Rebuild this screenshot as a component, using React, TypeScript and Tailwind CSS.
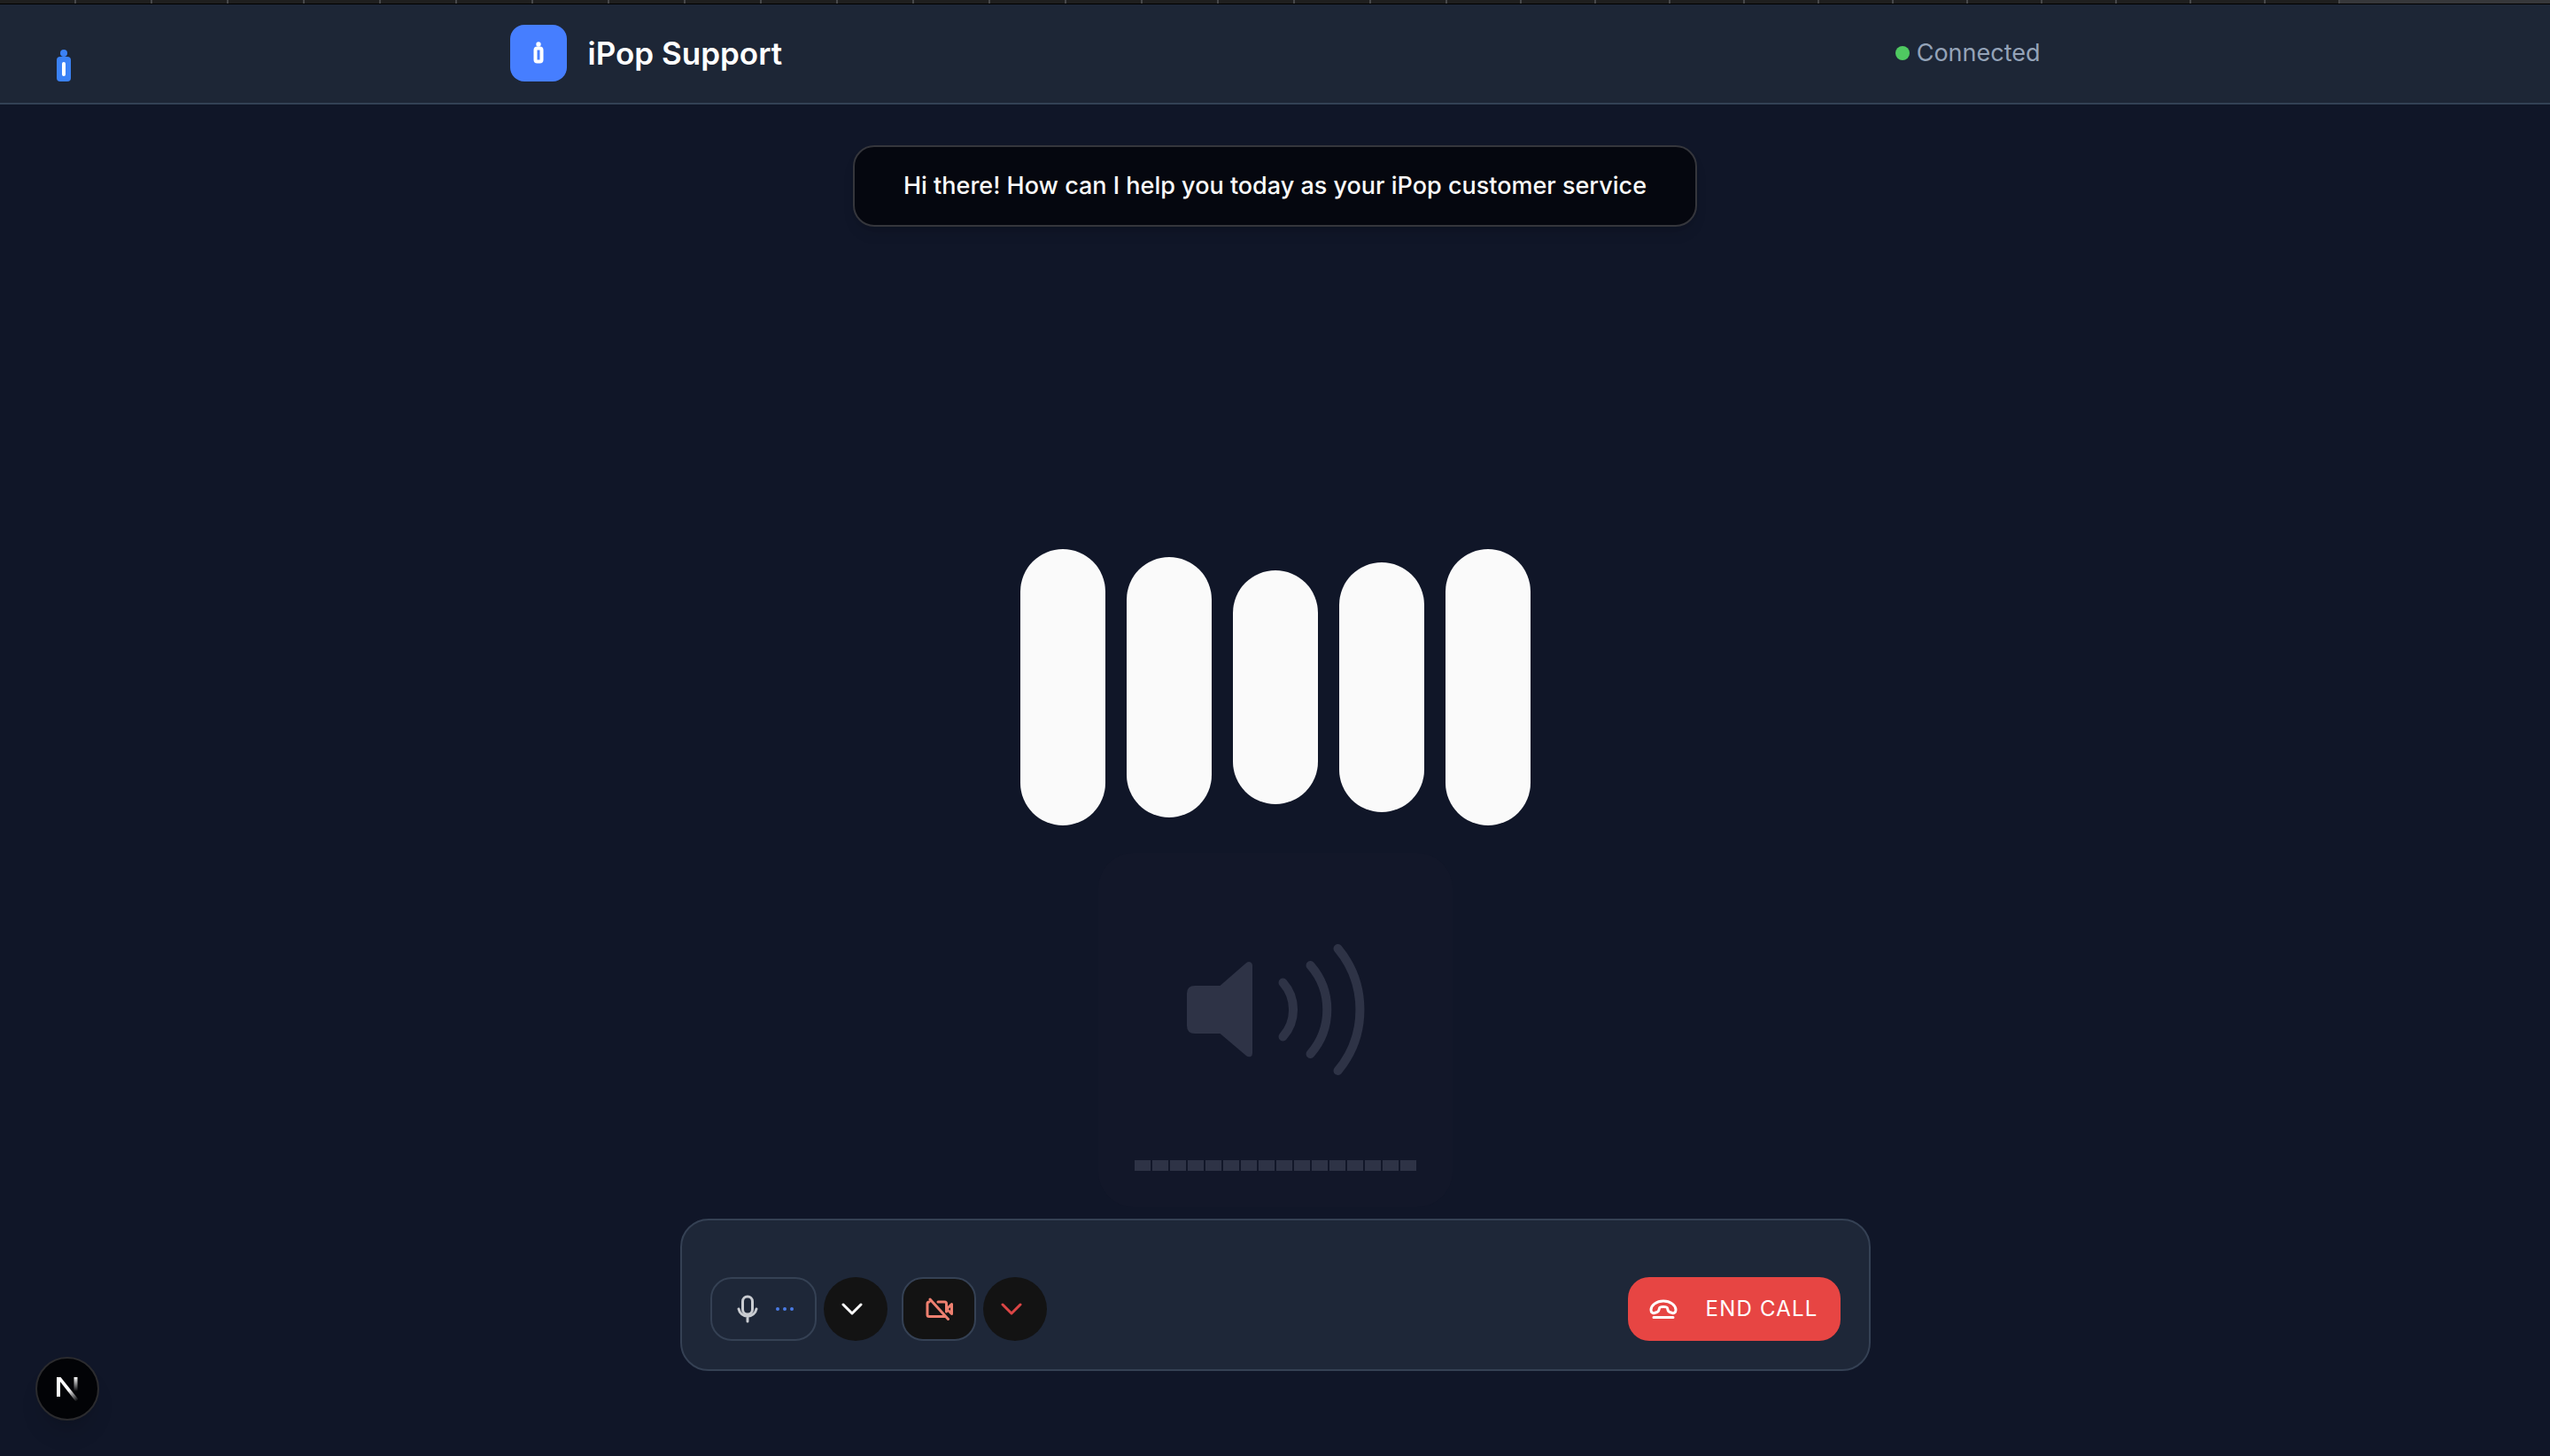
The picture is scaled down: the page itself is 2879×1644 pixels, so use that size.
import React from "react";

const FONT = "font-['Inter',sans-serif]";

function TabStrip() {
  return (
    <div aria-hidden="true" className="flex h-[5px] border-b border-black bg-[#1f1f1f]">
      {Array.from({ length: 19 }, (_, i) => (
        <div key={"a" + i} className="w-[86px] shrink-0 border-r-2 border-[#47484a]" />
      ))}
      {Array.from({ length: 12 }, (_, i) => (
        <div key={"b" + i} className="w-[84px] shrink-0 border-r-2 border-[#47484a]" />
      ))}
      <div className="flex-1 bg-[#36373a]" />
    </div>
  );
}

function Header() {
  return (
    <header className="relative border-b-2 border-[#334155] bg-[#1d2636] px-8 pt-[23px] pb-6">
      <svg aria-hidden="true" className="absolute top-[51px] left-16" width="16" height="36" viewBox="0 0 16 36">
        <circle cx="8" cy="4" r="4" fill="#3b82f6" />
        <rect y="8" width="16" height="28" rx="4" fill="#3b82f6" />
        <rect x="6" y="14" width="4" height="16" rx="2" fill="#fff" />
      </svg>
      <div className="mx-auto flex max-w-[1728px] items-center justify-between">
        <div className="flex items-center gap-6">
          <div className="flex size-16 items-center justify-center rounded-2xl bg-[#467eff]">
            <svg aria-hidden="true" width="12" height="26" viewBox="0 0 12 26">
              <circle cx="6" cy="3" r="2.7" fill="#fff" />
              <rect x="2.5" y="7.5" width="7" height="15" rx="2" fill="none" stroke="#fff" strokeWidth="4" />
            </svg>
          </div>
          <h1 className="text-[35px] leading-[56px] font-semibold text-white">iPop Support</h1>
        </div>
        <div className="flex items-center gap-2">
          <span className="size-4 rounded-full bg-[#4fc961]" />
          <span className="text-[27px] leading-10 text-[#94a3b8]">Connected</span>
        </div>
      </div>
    </header>
  );
}

function Speaker() {
  return (
    <svg aria-hidden="true" className="overflow-visible" width="200" height="150" viewBox="0 0 200 150">
      <path
        d="M9 48H37.5L67 22.300Q69.500 20.300 72 21.500Q74 22.500 74 25V124Q74 127 72 128Q69.500 129 67 127L37.500 102H9Q0 102 0 93V57Q0 48 9 48Z"
        fill="#2e3346"
      />
      <g fill="none" stroke="#2e3346" strokeWidth="10" strokeLinecap="round">
        <path d="M108.500 44.500A46 46 0 0 1 108.500 105.500" />
        <path d="M139.500 25A76 76 0 0 1 139.500 125" />
        <path d="M170.500 6A108 108 0 0 1 170.500 144" />
      </g>
    </svg>
  );
}

function Chevron() {
  return (
    <svg aria-hidden="true" width="24" height="14" viewBox="0 0 24 14" fill="none" stroke="currentColor" strokeWidth="3" strokeLinecap="round" strokeLinejoin="round">
      <path d="M2 2L12 12L22 2" />
    </svg>
  );
}

function Controls() {
  return (
    <section aria-label="Call controls" className="flex w-full max-w-[1344px] items-center justify-between rounded-[32px] border-2 border-[#354154] bg-[#1e2738] px-8 pt-16 pb-8">
      <div className="flex items-center gap-4">
        <div className="flex items-center gap-2">
          <button aria-label="Mute microphone" className="flex h-[72px] w-[120px] items-center gap-5 rounded-3xl border-2 border-[#354154] pl-7">
            <svg aria-hidden="true" width="24" height="32" viewBox="0 0 24 32" fill="none" stroke="#c9ccd1" strokeWidth="3" strokeLinecap="round">
              <rect x="6.500" y="2" width="11" height="20" rx="5.500" />
              <path d="M2 16A10.200 10.200 0 0 0 22 16M12 26V30" />
            </svg>
            <svg aria-hidden="true" width="20" height="4" viewBox="0 0 20 4" fill="#4a7be5">
              <circle cx="2" cy="2" r="2" />
              <circle cx="10" cy="2" r="2" />
              <circle cx="18" cy="2" r="2" />
            </svg>
          </button>
          <button aria-label="Choose microphone" className="flex size-[72px] items-center justify-center rounded-full bg-[#131313] pr-2 text-white">
            <Chevron />
          </button>
        </div>
        <div className="flex items-center gap-2">
          <button aria-label="Turn on camera" className="flex h-[72px] w-[84px] items-center justify-center rounded-3xl border-2 border-[#354154] bg-[#131313]">
            <svg aria-hidden="true" width="32" height="26" viewBox="0 0 32 26" fill="none" stroke="#ee8070" strokeWidth="3" strokeLinecap="round" strokeLinejoin="round">
              <path d="M6 2L26.500 24.500M5 5Q3 5 3 7V19.500Q3 21.500 5 21.500H22M15 5H22.500Q24.500 5 24.500 7V16M25 13L30.500 7.500V18.500L25 13" />
            </svg>
          </button>
          <button aria-label="Choose camera" className="flex size-[72px] items-center justify-center rounded-full bg-[#131313] pr-2 text-[#dc4646]">
            <Chevron />
          </button>
        </div>
      </div>
      <button className="flex h-[72px] w-60 items-center gap-8 rounded-3xl bg-[#e74543] pl-6 text-white">
        <svg aria-hidden="true" width="32" height="22" viewBox="0 0 32 22" fill="none" stroke="currentColor" strokeWidth="3" strokeLinecap="round" strokeLinejoin="round">
          <path d="M16 2C8 2 2 7 2 12C2 15 4 16 6 15.500L9 14.500C11 14 11 12 11.500 10C12 8 20 8 20.500 10C21 12 21 14 23 14.500L26 15.500C28 16 30 15 30 12C30 7 24 2 16 2ZM5 20.500H27" />
        </svg>
        <span className="text-2xl tracking-wider">END CALL</span>
      </button>
    </section>
  );
}

const BARS = [312, 294, 264, 282, 312];

export default function App() {
  return (
    <div className={"flex min-h-screen flex-col bg-[#101628] " + FONT}>
      <TabStrip />
      <Header />
      <main className="flex flex-1 flex-col items-center px-8 pt-[46px] pb-24">
        <p className="rounded-3xl border-2 border-[#35363c] bg-[#05070f] px-[55px] py-6 text-[27px] leading-10 font-medium text-[#fafafa] shadow-lg">
          Hi there! How can I help you today as your iPop customer service
        </p>
        <div className="flex flex-1 flex-col items-center justify-end">
          <div aria-hidden="true" className="mb-[31px] flex items-center gap-6">
            {BARS.map((height, i) => (
              <div key={i} className="w-24 rounded-full bg-[#fafafa]" style={{ height }} />
            ))}
          </div>
          <div className="mb-[13px] flex size-[400px] flex-col items-center justify-between rounded-[40px] bg-[#121729] pt-[102px] pb-[41px]">
            <Speaker />
            <div className="flex gap-[2px]">
              {Array.from({ length: 16 }, (_, i) => (
                <div key={i} className="h-3 w-[18px] bg-[#2e3346]" />
              ))}
            </div>
          </div>
        </div>
        <Controls />
      </main>
      <button aria-label="Open Next.js Dev Tools" className="fixed bottom-10 left-10 flex size-[72px] items-center justify-center rounded-full border-2 border-[#2b2b2e] bg-[#020306] shadow-xl">
        <svg aria-hidden="true" width="26" height="28" viewBox="0 0 26 28" fill="none">
          <defs>
            <linearGradient id="diag" x1="14" y1="16" x2="24" y2="28" gradientUnits="userSpaceOnUse">
              <stop stopColor="#fff" />
              <stop offset="1" stopColor="#fff" stopOpacity="0" />
            </linearGradient>
            <linearGradient id="stem" x1="22" y1="1" x2="22" y2="17" gradientUnits="userSpaceOnUse">
              <stop stopColor="#fff" />
              <stop offset="1" stopColor="#fff" stopOpacity="0" />
            </linearGradient>
          </defs>
          <path d="M1 23V1H5V23Z" fill="#fff" />
          <path d="M1 1H5.500L25.500 26L22.500 28.500L1 1Z" fill="url(#diag)" />
          <path d="M20.500 1H24.500V17H20.500Z" fill="url(#stem)" />
        </svg>
      </button>
    </div>
  );
}
